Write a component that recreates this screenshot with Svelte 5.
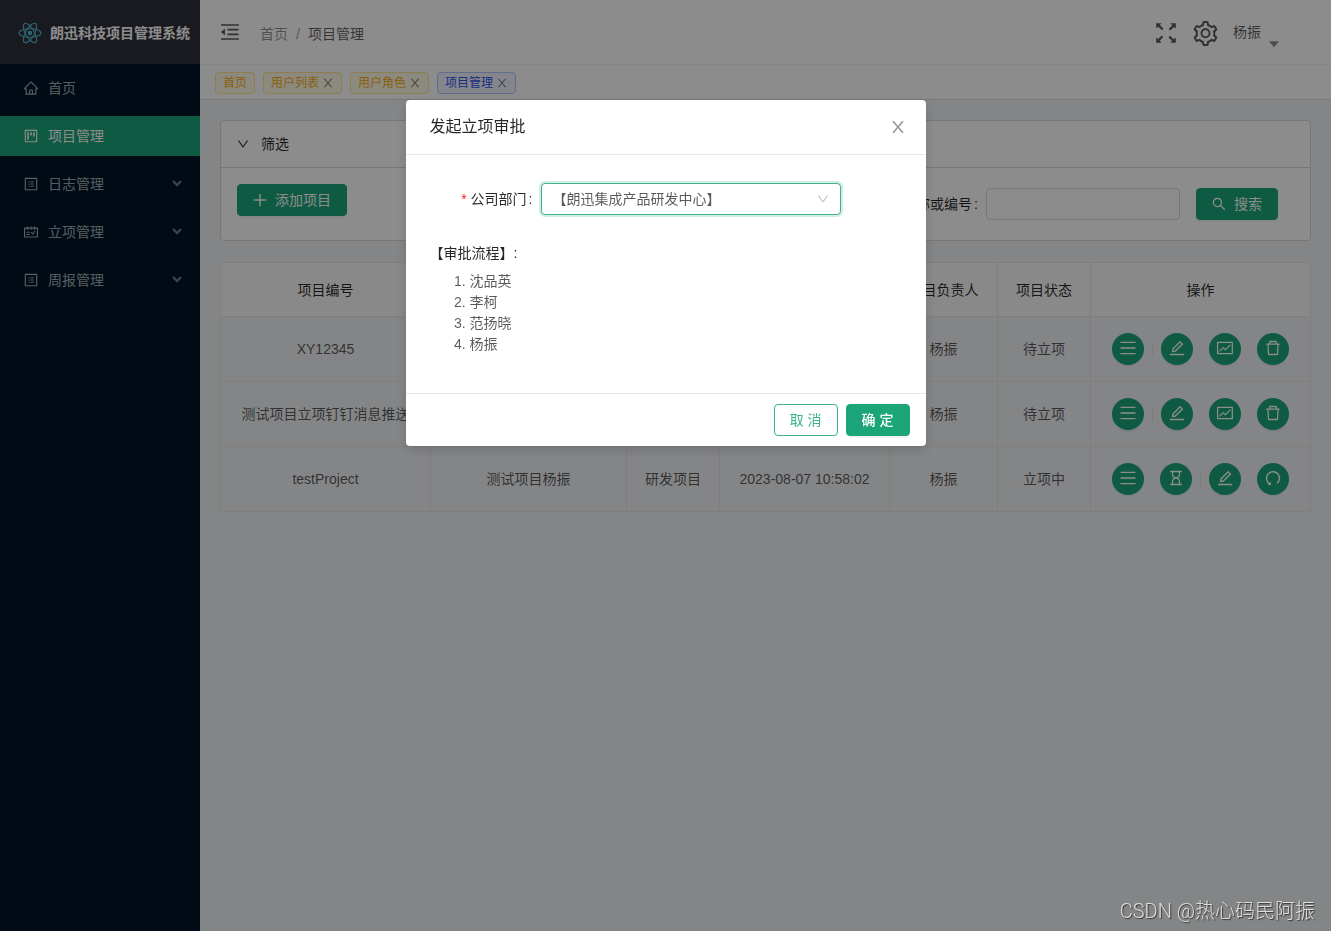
<script>
  const icons = {
    close: 'M563.8 512l262.5-312.9c4.4-5.2.7-13.1-6.1-13.1h-79.8c-4.7 0-9.2 2.1-12.3 5.7L511.6 449.8 295.1 191.7c-3-3.6-7.5-5.7-12.3-5.7H203c-6.8 0-10.5 7.9-6.1 13.1L459.4 512 196.9 824.9A7.95 7.95 0 0 0 203 838h79.8c4.7 0 9.2-2.1 12.3-5.7l216.5-258.1 216.5 258.1c3 3.6 7.5 5.7 12.3 5.7h79.8c6.8 0 10.5-7.9 6.1-13.1L563.8 512z',
    down: 'M884 256h-75c-5.1 0-9.9 2.5-12.9 6.6L512 654.2 227.9 262.6c-3-4.1-7.8-6.6-12.9-6.6h-75c-6.5 0-10.3 7.4-6.5 12.7l352.6 486.1c12.8 17.6 39 17.6 51.7 0l352.6-486.1c3.9-5.3.1-12.7-6.4-12.7z',
    home: 'M946.5 505L560.1 118.8l-25.9-25.9a31.5 31.5 0 0 0-44.4 0L77.5 505a63.9 63.9 0 0 0-18.8 46c.4 35.2 29.7 63.3 64.9 63.3h42.5V940h691.8V614.3h43.4c17.1 0 33.2-6.7 45.3-18.8a63.6 63.6 0 0 0 18.7-45.3c0-17-6.7-33.1-18.8-45.2zM568 868H456V664h112v204zm217.9-325.7V868H632V640c0-22.1-17.9-40-40-40H432c-22.1 0-40 17.9-40 40v228H238.1V542.3h-96l370-369.7 23.1 23.1L882 542.3h-96.1z',
    project: 'M280 752h80c4.4 0 8-3.6 8-8V280c0-4.4-3.6-8-8-8h-80c-4.4 0-8 3.6-8 8v464c0 4.4 3.6 8 8 8zm192-280h80c4.4 0 8-3.6 8-8V280c0-4.4-3.6-8-8-8h-80c-4.4 0-8 3.6-8 8v184c0 4.4 3.6 8 8 8zm192 72h80c4.4 0 8-3.6 8-8V280c0-4.4-3.6-8-8-8h-80c-4.4 0-8 3.6-8 8v256c0 4.4 3.6 8 8 8zm216-432H144c-17.7 0-32 14.3-32 32v736c0 17.7 14.3 32 32 32h736c17.7 0 32-14.3 32-32V144c0-17.7-14.3-32-32-32zm-40 728H184V184h656v656z',
    profile: 'M880 112H144c-17.7 0-32 14.3-32 32v736c0 17.7 14.3 32 32 32h736c17.7 0 32-14.3 32-32V144c0-17.7-14.3-32-32-32zm-40 728H184V184h656v656zM492 400h184c4.4 0 8-3.6 8-8v-48c0-4.4-3.6-8-8-8H492c-4.4 0-8 3.6-8 8v48c0 4.4 3.6 8 8 8zm0 144h184c4.4 0 8-3.6 8-8v-48c0-4.4-3.6-8-8-8H492c-4.4 0-8 3.6-8 8v48c0 4.4 3.6 8 8 8zm0 144h184c4.4 0 8-3.6 8-8v-48c0-4.4-3.6-8-8-8H492c-4.4 0-8 3.6-8 8v48c0 4.4 3.6 8 8 8zM340 368a40 40 0 1 0 80 0 40 40 0 1 0-80 0zm0 144a40 40 0 1 0 80 0 40 40 0 1 0-80 0zm0 144a40 40 0 1 0 80 0 40 40 0 1 0-80 0z',
    schedule: 'M928 224H768v-56c0-4.4-3.6-8-8-8h-56c-4.4 0-8 3.6-8 8v56H548v-56c0-4.4-3.6-8-8-8h-56c-4.4 0-8 3.6-8 8v56H328v-56c0-4.4-3.6-8-8-8h-56c-4.4 0-8 3.6-8 8v56H96c-17.7 0-32 14.3-32 32v576c0 17.7 14.3 32 32 32h832c17.7 0 32-14.3 32-32V256c0-17.7-14.3-32-32-32zm-40 568H136V296h120v56c0 4.4 3.6 8 8 8h56c4.4 0 8-3.6 8-8v-56h148v56c0 4.4 3.6 8 8 8h56c4.4 0 8-3.6 8-8v-56h148v56c0 4.4 3.6 8 8 8h56c4.4 0 8-3.6 8-8v-56h120v496zM416 496H232c-4.4 0-8 3.6-8 8v48c0 4.4 3.6 8 8 8h184c4.4 0 8-3.6 8-8v-48c0-4.4-3.6-8-8-8zm0 136H232c-4.4 0-8 3.6-8 8v48c0 4.4 3.6 8 8 8h184c4.4 0 8-3.6 8-8v-48c0-4.4-3.6-8-8-8zm308.2-177.4L620.6 598.3l-52.8-73.1c-3-4.2-7.8-6.6-12.9-6.6H500c-6.5 0-10.3 7.4-6.5 12.7l114.1 158.2a15.9 15.9 0 0 0 25.8 0l165-228.7c3.8-5.3 0-12.7-6.5-12.7H737c-5-.1-9.8 2.4-12.8 6.5z',
    edit: 'M257.7 752c2 0 4-.2 6-.5L431.9 722c2-.4 3.9-1.3 5.3-2.8l423.9-423.9a9.96 9.96 0 0 0 0-14.1L694.9 114.9c-1.9-1.9-4.4-2.9-7.1-2.9s-5.2 1-7.1 2.9L256.8 538.8c-1.5 1.5-2.4 3.3-2.8 5.3l-29.5 168.2a33.5 33.5 0 0 0 9.4 29.8c6.6 6.4 14.9 9.9 23.8 9.9zm67.4-174.4L687.8 215l73.3 73.3-362.7 362.6-88.9 15.7 15.6-89zM880 836H144c-17.7 0-32 14.3-32 32v36c0 4.4 3.6 8 8 8h784c4.4 0 8-3.6 8-8v-36c0-17.7-14.3-32-32-32z',
    chart: 'M926 164H94c-17.7 0-32 14.3-32 32v640c0 17.7 14.3 32 32 32h832c17.7 0 32-14.3 32-32V196c0-17.7-14.3-32-32-32zm-40 632H134V236h752v560zm-658.9-82.3c3.1 3.1 8.2 3.1 11.3 0l172.5-172.5 114.4 114.5c3.1 3.1 8.2 3.1 11.3 0l297-297.2c3.1-3.1 3.1-8.2 0-11.3l-36.8-36.8a8.03 8.03 0 0 0-11.3 0L531 565 416.6 450.5a8.03 8.03 0 0 0-11.3 0l-214.9 215a8.03 8.03 0 0 0 0 11.3l36.7 36.9z',
    trash: 'M360 184h-8c4.4 0 8-3.6 8-8v8h304v-8c0 4.4 3.6 8 8 8h-8v72h72v-80c0-35.3-28.7-64-64-64H352c-35.3 0-64 28.7-64 64v80h72v-72zm504 72H160c-17.7 0-32 14.3-32 32v32c0 4.4 3.6 8 8 8h60.4l24.7 523c1.6 34.1 29.8 61 63.9 61h454c34.2 0 62.3-26.8 63.9-61l24.7-523H888c4.4 0 8-3.6 8-8v-32c0-17.7-14.3-32-32-32zM731.3 840H292.7l-24.2-512h487l-24.2 512z',
    hourglass: 'M742 318V184h86c4.4 0 8-3.6 8-8v-56c0-4.4-3.6-8-8-8H196c-4.4 0-8 3.6-8 8v56c0 4.4 3.6 8 8 8h86v134c0 81.5 42.4 153.2 106.4 194-64 40.8-106.4 112.5-106.4 194v134h-86c-4.4 0-8 3.6-8 8v56c0 4.4 3.6 8 8 8h632c4.4 0 8-3.6 8-8v-56c0-4.4-3.6-8-8-8h-86V706c0-81.5-42.4-153.2-106.4-194 64-40.8 106.4-112.5 106.4-194zm-72 388v134H354V706c0-42.2 16.4-81.9 46.3-111.7C430.1 564.4 469.8 548 512 548s81.9 16.4 111.7 46.3C653.6 624.1 670 663.8 670 706zm0-388c0 42.2-16.4 81.9-46.3 111.7C593.9 459.6 554.2 476 512 476s-81.9-16.4-111.7-46.3A156.63 156.63 0 0 1 354 318V184h316v134z',
    undo: 'M511.4 124C290.5 124.3 112 303 112 523.9c0 128 60.2 242 153.8 315.2l-37.5 48c-4.1 5.3-.3 13 6.3 12.9l167-.8c5.2 0 9-4.9 7.7-9.9L369.8 727a8 8 0 0 0-14.1-3L315 776.1c-10.2-8-20-16.7-29.3-26a318.64 318.64 0 0 1-68.6-101.7C200.4 609 192 567.1 192 523.9s8.4-85.1 25.1-124.5c16.1-38.1 39.2-72.3 68.6-101.7 29.4-29.4 63.6-52.5 101.7-68.6C426.9 212.4 468.8 204 512 204s85.1 8.4 124.5 25.1c38.1 16.1 72.3 39.2 101.7 68.6 29.4 29.4 52.5 63.6 68.6 101.7 16.7 39.4 25.1 81.3 25.1 124.5s-8.4 85.1-25.1 124.5a318.64 318.64 0 0 1-68.6 101.7c-7.5 7.5-15.3 14.5-23.4 21.2a7.93 7.93 0 0 0-1.2 11.1l39.4 50.5c2.8 3.5 7.9 4.1 11.4 1.3C854.5 760.8 912 649.1 912 523.9c0-221.1-179.4-400.2-400.6-399.9z',
    search: 'M909.6 854.5L649.9 594.8C690.2 542.7 712 479 712 412c0-80.2-31.3-155.4-87.9-212.1-56.6-56.7-132-87.9-212.1-87.9s-155.5 31.3-212.1 87.9C143.2 256.5 112 331.8 112 412c0 80.1 31.3 155.5 87.9 212.1C256.5 680.8 331.8 712 412 712c67 0 130.6-21.8 182.7-62l259.7 259.6a8.2 8.2 0 0 0 11.6 0l43.6-43.5a8.2 8.2 0 0 0 0-11.6zM570.4 570.4C528 612.7 471.8 636 412 636s-116-23.3-158.4-65.6C211.3 528 188 471.8 188 412s23.3-116.1 65.6-158.4C296 211.3 352.2 188 412 188s116.1 23.2 158.4 65.6S636 352.2 636 412s-23.3 116.1-65.6 158.4z',
    fold: 'M408 442h480c4.4 0 8-3.6 8-8v-56c0-4.4-3.6-8-8-8H408c-4.4 0-8 3.6-8 8v56c0 4.4 3.6 8 8 8zm-8 204c0 4.4 3.6 8 8 8h480c4.4 0 8-3.6 8-8v-56c0-4.4-3.6-8-8-8H408c-4.4 0-8 3.6-8 8v56zm504-486H120c-4.4 0-8 3.6-8 8v56c0 4.4 3.6 8 8 8h784c4.4 0 8-3.6 8-8v-56c0-4.4-3.6-8-8-8zm0 632H120c-4.4 0-8 3.6-8 8v56c0 4.4 3.6 8 8 8h784c4.4 0 8-3.6 8-8v-56c0-4.4-3.6-8-8-8zM115.4 518.9L271.7 642c5.8 4.6 14.4.5 14.4-6.9V388.9c0-7.4-8.5-11.5-14.4-6.9L115.4 505.1a8.74 8.74 0 0 0 0 13.8z',
    menu: 'M92 155h840v80H92zM92 472h840v80H92zM92 788h840v80H92z',
    plus: 'M466 120h92v346h346v92H558v346h-92V558H120v-92h346z',
    caret: 'M190 340h644L512 720z',
    setting: 'M924.8 625.7l-65.5-56c3.1-19 4.7-38.4 4.7-57.8s-1.6-38.8-4.7-57.8l65.5-56a32.03 32.03 0 0 0 9.3-35.2l-.9-2.6a443.74 443.74 0 0 0-79.7-137.9l-1.8-2.1a32.12 32.12 0 0 0-35.1-9.5l-81.3 28.9c-30-24.6-63.5-44-99.7-57.6l-15.7-85a32.05 32.05 0 0 0-25.8-25.7l-2.7-.5c-52.1-9.4-106.9-9.4-159 0l-2.7.5a32.05 32.05 0 0 0-25.8 25.7l-15.8 85.4a351.86 351.86 0 0 0-99 57.4l-81.9-29.1a32 32 0 0 0-35.1 9.5l-1.8 2.1a446.02 446.02 0 0 0-79.7 137.9l-.9 2.6c-4.5 12.5-.8 26.5 9.3 35.2l66.3 56.6c-3.1 18.8-4.6 38-4.6 57.1 0 19.2 1.5 38.4 4.6 57.1L99 625.5a32.03 32.03 0 0 0-9.3 35.2l.9 2.6c18.1 50.4 44.9 96.9 79.7 137.9l1.8 2.1a32.12 32.12 0 0 0 35.1 9.5l81.9-29.1c29.8 24.5 63.1 43.9 99 57.4l15.8 85.4a32.05 32.05 0 0 0 25.8 25.7l2.7.5a449.4 449.4 0 0 0 159 0l2.7-.5a32.05 32.05 0 0 0 25.8-25.7l15.7-85a350 350 0 0 0 99.7-57.6l81.3 28.9a32 32 0 0 0 35.1-9.5l1.8-2.1c34.8-41.1 61.6-87.5 79.7-137.9l.9-2.6c4.5-12.3.8-26.3-9.3-35zM788.3 465.9c2.5 15.1 3.8 30.6 3.8 46.1s-1.3 31-3.8 46.1l-6.6 40.1 74.7 63.9a370.03 370.03 0 0 1-42.6 73.6L721 702.8l-31.4 25.8c-23.9 19.6-50.5 35-79.3 45.8l-38.1 14.3-17.9 97a377.5 377.5 0 0 1-85 0l-17.9-97.2-37.8-14.5c-28.5-10.8-55-26.2-78.7-45.7l-31.4-25.9-93.4 33.2c-17-22.9-31.2-47.6-42.6-73.6l75.5-64.5-6.5-40c-2.4-14.9-3.7-30.3-3.7-45.5 0-15.3 1.2-30.6 3.7-45.5l6.5-40-75.5-64.5c11.3-26.1 25.6-50.7 42.6-73.6l93.4 33.2 31.4-25.9c23.7-19.5 50.2-34.9 78.7-45.7l37.9-14.3 17.9-97.2c28.1-3.2 56.8-3.2 85 0l17.9 97 38.1 14.3c28.7 10.8 55.4 26.2 79.3 45.8l31.4 25.8 92.8-32.9c17 22.9 31.2 47.6 42.6 73.6L781.8 426l6.5 39.9zM512 326c-97.2 0-176 78.8-176 176s78.8 176 176 176 176-78.8 176-176-78.8-176-176-176zm79.2 255.2A111.6 111.6 0 0 1 512 614c-29.9 0-58-11.7-79.2-32.8A111.6 111.6 0 0 1 400 502c0-29.9 11.7-58 32.8-79.2C454 401.6 482.1 390 512 390c29.9 0 58 11.6 79.2 32.8A111.6 111.6 0 0 1 624 502c0 29.9-11.7 58-32.8 79.2z'
  };

  const corners = [0, 90, 180, 270];

  const menu = [
    { label: '首页', icon: 'home' },
    { label: '项目管理', icon: 'project', active: true },
    { label: '日志管理', icon: 'profile', children: true },
    { label: '立项管理', icon: 'schedule', children: true },
    { label: '周报管理', icon: 'profile', children: true }
  ];

  const tags = [
    { label: '首页' },
    { label: '用户列表', closable: true },
    { label: '用户角色', closable: true },
    { label: '项目管理', closable: true, active: true }
  ];

  const columns = [
    { title: '项目编号', width: 211 },
    { title: '项目名称', width: 196 },
    { title: '项目类型', width: 93 },
    { title: '创建时间', width: 170 },
    { title: '项目负责人', width: 108 },
    { title: '项目状态', width: 93 },
    { title: '操作', width: 220 }
  ];

  const draftActions = [['menu', '详情'], null, ['edit', '编辑'], ['chart', '立项'], ['trash', '删除']];
  const pendingActions = [['menu', '详情'], ['hourglass', '进度'], null, ['edit', '编辑'], ['undo', '撤回']];

  const rows = [
    { cells: ['XY12345', '测试项目', '研发项目', '', '杨振', '待立项'], actions: draftActions },
    { cells: ['测试项目立项钉钉消息推送', '测试项目推送', '研发项目', '', '杨振', '待立项'], actions: draftActions },
    { cells: ['testProject', '测试项目杨振', '研发项目', '2023-08-07 10:58:02', '杨振', '立项中'], actions: pendingActions }
  ];

  const approvers = ['沈品英', '李柯', '范扬晓', '杨振'];
  const departments = ['【朗迅集成产品研发中心】'];

  let department = $state(departments[0]);
  let keyword = $state('');
  let open = $state(true);
</script>

{#snippet icon(name)}
  <svg class="icon" viewBox="64 64 896 896" aria-hidden="true"><path d={icons[name]} /></svg>
{/snippet}

<div class="layout">
  <aside>
    <div class="brand">
      <svg class="atom" viewBox="0 0 24 24" aria-hidden="true">
        <ellipse cx="12" cy="12" rx="11" ry="4.3" />
        <ellipse cx="12" cy="12" rx="11" ry="4.3" transform="rotate(60 12 12)" />
        <ellipse cx="12" cy="12" rx="11" ry="4.3" transform="rotate(120 12 12)" />
        <circle cx="12" cy="12" r="2.2" />
      </svg>
      <h1>朗迅科技项目管理系统</h1>
    </div>
    <nav>
      {#each menu as item}
        <a href="#menu" class:active={item.active}>
          {@render icon(item.icon)}
          <span>{item.label}</span>
          {#if item.children}
            <svg class="arrow" viewBox="0 0 10 8" aria-hidden="true"><path d="M1 2l4 4 4-4" /></svg>
          {/if}
        </a>
      {/each}
    </nav>
  </aside>

  <div class="page">
    <header>
      <button class="plain fold" aria-label="收起菜单">{@render icon('fold')}</button>
      <div class="crumbs">
        <a href="#home">首页</a><span class="slash">/</span><span class="current">项目管理</span>
      </div>
      <div class="tools">
        <button class="plain full" aria-label="全屏">
          <svg viewBox="0 0 20 20" aria-hidden="true">
            {#each corners as angle}
              <path d="M.2.200h5.400L3.900 2.100 7.500 5.700 6 7.200 2.300 3.700.200 5.600z" transform={`rotate(${angle} 10 10)`} />
            {/each}
          </svg>
        </button>
        <button class="plain gear" aria-label="设置">{@render icon('setting')}</button>
        <button class="plain user"><span>杨振</span>{@render icon('caret')}</button>
      </div>
    </header>

    <div class="tags">
      {#each tags as tag}
        <span class="tag" class:active={tag.active}>
          {tag.label}
          {#if tag.closable}
            <button class="plain" aria-label={`关闭${tag.label}`}>{@render icon('close')}</button>
          {/if}
        </span>
      {/each}
    </div>

    <main>
      <section class="card">
        <button class="plain card-head">{@render icon('down')}<span>筛选</span></button>
        <div class="card-body">
          <button class="primary">{@render icon('plus')}<span>添加项目</span></button>
          <form class="search">
            <label for="keyword">项目名称或编号<span class="colon">:</span></label>
            <input id="keyword" type="text" bind:value={keyword} />
            <button type="button" class="primary">{@render icon('search')}<span>搜索</span></button>
          </form>
        </div>
      </section>

      <table>
        <colgroup>
          {#each columns as column}
            <col style:width={`${column.width}px`} />
          {/each}
        </colgroup>
        <thead>
          <tr>
            {#each columns as column}
              <th>{column.title}</th>
            {/each}
          </tr>
        </thead>
        <tbody>
          {#each rows as row}
            <tr>
              {#each row.cells as cell}
                <td>{cell}</td>
              {/each}
              <td>
                <div class="actions">
                  {#each row.actions as action}
                    {#if action}
                      <button class="round" aria-label={action[1]}>{@render icon(action[0])}</button>
                    {:else}
                      <i class="divider"></i>
                    {/if}
                  {/each}
                </div>
              </td>
            </tr>
          {/each}
        </tbody>
      </table>
    </main>
  </div>
</div>

{#if open}
  <div class="mask">
    <div class="modal" role="dialog" aria-modal="true" aria-labelledby="modal-title">
      <div class="modal-head">
        <h2 id="modal-title">发起立项审批</h2>
        <button class="plain" aria-label="关闭" onclick={() => (open = false)}>{@render icon('close')}</button>
      </div>
      <div class="modal-body">
        <div class="field">
          <label for="department"><span class="required">*</span>公司部门<span class="colon">:</span></label>
          <div class="select">
            <select id="department" bind:value={department}>
              {#each departments as name}
                <option value={name}>{name}</option>
              {/each}
            </select>
            {@render icon('down')}
          </div>
        </div>
        <p>【审批流程】:</p>
        <ol>
          {#each approvers as name}
            <li>{name}</li>
          {/each}
        </ol>
      </div>
      <div class="modal-foot">
        <button class="ghost" onclick={() => (open = false)}>取 消</button>
        <button class="primary confirm" onclick={() => (open = false)}>确 定</button>
      </div>
    </div>
  </div>
{/if}

<div class="watermark">CSDN @热心码民阿振</div>

<style>
  :global(body) {
    margin: 0;
    background: #f0f2f5;
  }

  .layout,
  .modal,
  button,
  input,
  select {
    font-family: 'Liberation Sans', 'Noto Sans CJK SC', sans-serif;
    font-size: 14px;
    line-height: 22px;
  }

  .layout *,
  .mask,
  .mask * {
    box-sizing: border-box;
  }

  .layout {
    display: flex;
    min-height: 100vh;
    color: rgba(0, 0, 0, 0.65);
  }

  h1,
  h2,
  p,
  ol {
    margin: 0;
  }

  a {
    color: inherit;
    text-decoration: none;
  }

  .icon {
    display: block;
    flex: none;
    width: 1em;
    height: 1em;
    fill: currentColor;
  }

  .plain {
    display: flex;
    align-items: center;
    padding: 0;
    border: 0;
    background: none;
    color: inherit;
    cursor: pointer;
  }

  .colon {
    margin-left: 2px;
  }

  aside {
    flex: none;
    width: 200px;
    background: #001529;
    color: rgba(255, 255, 255, 0.65);
  }

  .brand {
    display: flex;
    align-items: center;
    gap: 8px;
    height: 64px;
    padding: 2px 8px 0 18px;
    background: #2f313a;
    color: #fff;
  }

  .brand h1 {
    font-size: 14px;
    font-weight: 700;
    white-space: nowrap;
  }

  .atom {
    flex: none;
    width: 24px;
    height: 24px;
    fill: none;
    stroke: #53b9d5;
    stroke-width: 1.1;
  }

  .atom circle {
    fill: #53b9d5;
    stroke: none;
  }

  nav {
    display: flex;
    flex-direction: column;
    gap: 8px;
    padding-top: 4px;
  }

  nav a {
    display: flex;
    align-items: center;
    gap: 10px;
    height: 40px;
    padding: 0 18px 0 24px;
  }

  nav a.active {
    background: #1da57a;
    color: #fff;
  }

  .arrow {
    width: 10px;
    height: 8px;
    margin: 0 0 2px auto;
    fill: none;
    stroke: currentColor;
    stroke-width: 2;
    opacity: 0.7;
  }

  .page {
    flex: 1;
    min-width: 0;
  }

  header {
    display: flex;
    align-items: center;
    height: 64px;
    padding: 0 50px 0 20px;
    background: #fff;
  }

  .fold {
    font-size: 20px;
  }

  .crumbs {
    display: flex;
    gap: 8px;
    margin-left: 20px;
    padding-top: 4px;
    color: rgba(0, 0, 0, 0.45);
  }

  .crumbs .current {
    color: rgba(0, 0, 0, 0.65);
  }

  .tools {
    display: flex;
    align-items: center;
    margin-left: auto;
    padding-top: 2px;
  }

  .full svg {
    width: 20px;
    height: 20px;
    fill: #595959;
  }

  .gear {
    margin: 0 15px 0 17px;
    font-size: 25px;
  }

  .user {
    align-items: flex-start;
    gap: 6px;
    height: 24px;
  }

  .user .icon {
    width: 14px;
    height: 14px;
    margin-top: 16px;
    color: rgba(0, 0, 0, 0.45);
  }

  .tags {
    display: flex;
    align-items: center;
    gap: 8px;
    height: 36px;
    padding: 2px 15px 0;
    border-top: 1px solid #f5f5f5;
    border-bottom: 1px solid #d8dce5;
    background: #fff;
  }

  .tag {
    display: flex;
    align-items: center;
    gap: 3px;
    height: 22px;
    padding: 0 7px;
    border: 1px solid #ffe58f;
    border-radius: 4px;
    background: #fffbe6;
    color: #faad14;
    font-size: 12px;
    line-height: 20px;
  }

  .tag.active {
    border-color: #adc6ff;
    background: #f0f5ff;
    color: #2f54eb;
  }

  .tag button {
    color: rgba(0, 0, 0, 0.5);
    font-size: 12px;
  }

  main {
    padding: 20px;
  }

  .card {
    border: 1px solid #d9d9d9;
    border-radius: 4px;
    background: #fff;
  }

  .card-head {
    gap: 12px;
    width: 100%;
    height: 47px;
    padding: 0 16px;
    border-bottom: 1px solid #d9d9d9;
    color: rgba(0, 0, 0, 0.85);
  }

  .card-head .icon {
    width: 12px;
    height: 12px;
  }

  .card-body {
    display: flex;
    align-items: flex-start;
    justify-content: space-between;
    padding: 16px 32px 20px 16px;
  }

  .primary,
  .ghost {
    display: inline-flex;
    align-items: center;
    justify-content: center;
    gap: 8px;
    height: 32px;
    padding: 0 15px;
    border: 1px solid #1da57a;
    border-radius: 4px;
    background: #1da57a;
    box-shadow: 0 2px 0 rgba(0, 0, 0, 0.045);
    color: #fff;
    cursor: pointer;
  }

  .ghost {
    border-color: #3eb28c;
    background: #fff;
    box-shadow: none;
    color: #3eb28c;
  }

  .search {
    display: flex;
    align-items: center;
    margin-top: 4px;
    color: rgba(0, 0, 0, 0.85);
  }

  .search input {
    width: 194px;
    height: 32px;
    margin: 0 16px 0 8px;
    padding: 4px 11px;
    border: 1px solid #d9d9d9;
    border-radius: 4px;
    background: #fff;
  }

  table {
    width: 100%;
    margin-top: 21px;
    border-collapse: separate;
    border-spacing: 0;
    table-layout: fixed;
  }

  th,
  td {
    padding: 15px 16px;
    border-right: 1px solid #e8e8e8;
    border-bottom: 1px solid #e8e8e8;
    text-align: center;
  }

  th {
    height: 55px;
    border-top: 1px solid #e8e8e8;
    background: #fafafa;
    color: rgba(0, 0, 0, 0.85);
    font-weight: 400;
    white-space: nowrap;
  }

  td {
    height: 65px;
  }

  th:first-child,
  td:first-child {
    border-left: 1px solid #e8e8e8;
  }

  th:first-child {
    border-top-left-radius: 4px;
  }

  th:last-child {
    border-top-right-radius: 4px;
  }

  .actions {
    display: flex;
    align-items: center;
    justify-content: center;
  }

  .round {
    display: flex;
    align-items: center;
    justify-content: center;
    width: 32px;
    height: 32px;
    padding: 0 0 2px;
    border: 0;
    border-radius: 50%;
    background: #1da57a;
    box-shadow: 0 2px 0 rgba(0, 0, 0, 0.045);
    color: #fff;
    font-size: 16px;
    cursor: pointer;
  }

  .round + .round {
    margin-left: 16px;
  }

  .divider {
    width: 1px;
    height: 13px;
    margin: 0 8px;
    background: #e0e0e0;
  }

  .mask {
    position: fixed;
    inset: 0;
    display: flex;
    align-items: flex-start;
    justify-content: center;
    padding-top: 100px;
    background: rgba(0, 0, 0, 0.45);
  }

  .modal {
    width: 520px;
    max-width: 100%;
    border-radius: 4px;
    background: #fff;
    box-shadow: 0 4px 12px rgba(0, 0, 0, 0.15);
    color: rgba(0, 0, 0, 0.65);
  }

  .modal-head {
    display: flex;
    align-items: center;
    justify-content: space-between;
    height: 55px;
    padding: 0 20px 0 24px;
    border-bottom: 1px solid #e8e8e8;
  }

  .modal-head h2 {
    color: rgba(0, 0, 0, 0.85);
    font-size: 16px;
    font-weight: 400;
  }

  .modal-head button {
    color: rgba(0, 0, 0, 0.45);
    font-size: 16px;
  }

  .modal-body {
    padding: 28px 24px 38px;
  }

  .field {
    display: grid;
    grid-template-columns: 103px 300px;
    gap: 8px;
    align-items: center;
    color: rgba(0, 0, 0, 0.85);
  }

  .field label {
    text-align: right;
  }

  .required {
    margin-right: 4px;
    color: #f5222d;
  }

  .select {
    position: relative;
  }

  .select select {
    display: block;
    width: 100%;
    height: 32px;
    padding: 0 30px 0 11px;
    border: 1px solid #3eb28c;
    border-radius: 4px;
    outline: 0;
    appearance: none;
    background: #fff;
    box-shadow: 0 0 0 2px rgba(29, 165, 122, 0.2);
    color: rgba(0, 0, 0, 0.65);
  }

  .select .icon {
    position: absolute;
    top: 10px;
    right: 12px;
    width: 12px;
    height: 12px;
    color: rgba(0, 0, 0, 0.25);
    pointer-events: none;
  }

  .modal-body p {
    margin-top: 27px;
    color: rgba(0, 0, 0, 0.85);
  }

  ol {
    margin-top: 7px;
    padding-left: 40px;
    line-height: 21px;
  }

  .modal-foot {
    display: flex;
    justify-content: flex-end;
    gap: 8px;
    padding: 10px 16px;
    border-top: 1px solid #e8e8e8;
  }

  .confirm {
    font-weight: 500;
  }

  .watermark {
    position: fixed;
    right: 16px;
    bottom: 6px;
    color: rgba(255, 255, 255, 0.75);
    font-family: Roboto, 'Noto Sans CJK SC', sans-serif;
    font-size: 20px;
    font-weight: 300;
    line-height: 28px;
    text-shadow: 1px 1px 1px rgba(0, 0, 0, 0.6);
  }
</style>
